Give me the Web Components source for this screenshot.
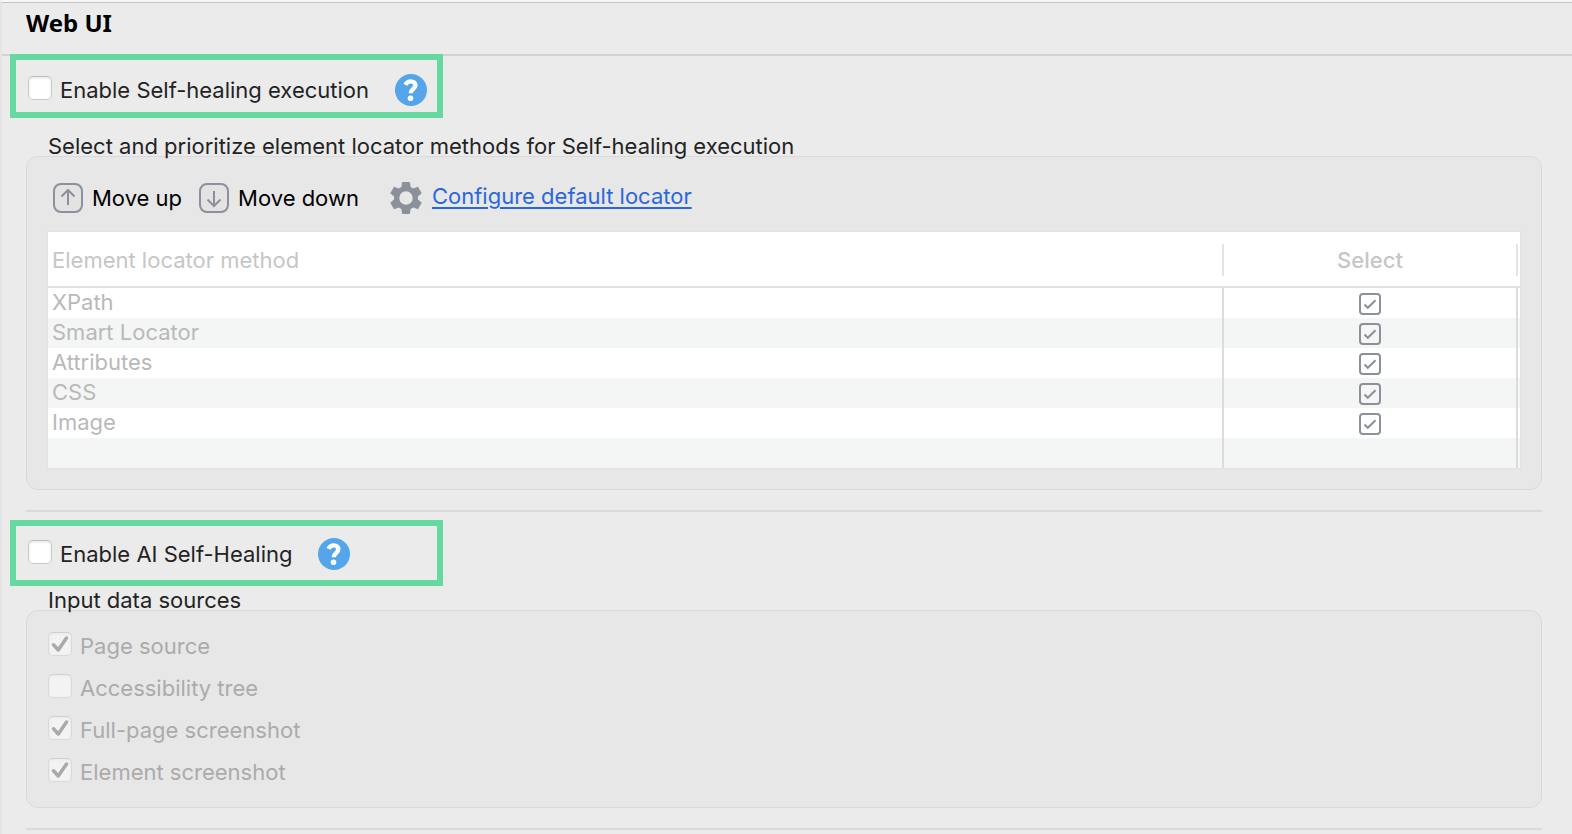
<!DOCTYPE html>
<html lang="en">
<head>
<meta charset="utf-8">
<title>Web UI</title>
<style>
  body { margin: 0; min-height: 100vh; background: #ebebeb; color: #232323; font: 22px/26px Inter, "Liberation Sans", sans-serif; }
</style>
</head>
<body>
<settings-page heading="Web UI">
  <feature-toggle label="Enable Self-healing execution" first></feature-toggle>
  <settings-group label="Select and prioritize element locator methods for Self-healing execution">
    <locator-toolbar></locator-toolbar>
    <locator-table></locator-table>
  </settings-group>
  <section-rule></section-rule>
  <feature-toggle label="Enable AI Self-Healing"></feature-toggle>
  <settings-group label="Input data sources" compact>
    <source-list>
      <check-option label="Page source" checked disabled></check-option>
      <check-option label="Accessibility tree" disabled></check-option>
      <check-option label="Full-page screenshot" checked disabled></check-option>
      <check-option label="Element screenshot" checked disabled></check-option>
    </source-list>
  </settings-group>
  <section-rule></section-rule>
</settings-page>

<script>
class BaseElement extends HTMLElement {
  constructor() {
    super();
    this.attachShadow({ mode: 'open' });
  }
  connectedCallback() {
    this.shadowRoot.innerHTML = this.render();
  }
}

customElements.define('settings-page', class extends BaseElement {
  render() {
    return `
      <style>
        :host { display: block; box-sizing: border-box; min-height: 100vh; border-top: 2px solid #f5f6f8; border-left: 2px solid #e4e4e4; }
        header { box-sizing: border-box; height: 54px; padding: 4px 24px; border-top: 1px solid #c3c3c3; border-bottom: 2px solid #d3d3d3; }
        h1 { margin: 0; font: bold 24px/32px "Noto Sans", sans-serif; color: #000; }
        main { display: flex; flex-direction: column; margin-top: -2px; }
      </style>
      <header><h1>${this.getAttribute('heading')}</h1></header>
      <main><slot></slot></main>`;
  }
});

customElements.define('check-option', class extends BaseElement {
  render() {
    const has = name => this.hasAttribute(name) ? name : '';
    return `
      <style>
        :host { display: block; }
        label { display: flex; gap: 8px; align-items: flex-start; height: 28px; line-height: 28px; white-space: nowrap; }
        .box { display: grid; }
        .box > * { grid-area: 1 / 1; }
        input { appearance: none; box-sizing: border-box; width: 24px; height: 24px; margin: 0; border: 1px solid #cbcbcb; border-top-color: #bdbdbd; border-radius: 5px; background: #fff; box-shadow: inset 0 1px 3px #e2e2e2; }
        input:disabled { border-color: #d9d9d9; border-top-color: #cfcfcf; background: #f3f3f3; box-shadow: inset 0 1px 3px #e9e9e9; }
        :host([disabled]) { color: #ababab; }
        svg { display: none; pointer-events: none; }
        input:checked + svg { display: block; }
      </style>
      <label>
        <span class="box">
          <input type="checkbox" ${has('checked')} ${has('disabled')}>
          <svg width="24" height="24" viewBox="0 0 24 24" fill="none" stroke="#aaa" stroke-width="3.5" stroke-linecap="round" stroke-linejoin="round"><path d="M5.500 12.800 10.300 18 18.500 6"/></svg>
        </span>
        <span>${this.getAttribute('label')}</span>
      </label>`;
  }
});

customElements.define('help-button', class extends BaseElement {
  render() {
    return `
      <style>
        :host { display: block; }
        button { display: block; width: 32px; height: 32px; margin: 0; padding: 0; border: 0; border-radius: 50%; background: none; }
        svg { display: block; }
      </style>
      <button type="button" aria-label="Help">
        <svg width="32" height="32" viewBox="0 0 32 32"><circle cx="16" cy="16" r="16" fill="#54a5e9"/><path d="M10.500 10.800C11.500 8.500 13.500 7.400 15.800 7.400c2.700 0 4.600 1.500 4.600 3.900 0 3.500-4.700 3.700-4.700 8" fill="none" stroke="#fff" stroke-width="4.400"/><circle cx="15.500" cy="24.200" r="2.800" fill="#fff"/></svg>
      </button>`;
  }
});

customElements.define('feature-toggle', class extends BaseElement {
  render() {
    return `
      <style>
        :host { display: flex; align-items: center; gap: 26px; box-sizing: border-box; width: 433px; height: 66px; margin-left: 8px; padding: 2px 12px 0; border: 6px solid #64d9a0; }
        :host([first]) { height: 64px; padding-top: 8px; }
      </style>
      <check-option label="${this.getAttribute('label')}"></check-option>
      <help-button></help-button>`;
  }
});

customElements.define('settings-group', class extends BaseElement {
  render() {
    return `
      <style>
        :host { display: block; margin: 15px 30px 0 24px; }
        :host([compact]) { margin-top: 1px; }
        fieldset { min-width: 0; margin: 0; padding: 0; border: 0; }
        legend { display: block; height: 23px; padding: 0 22px; line-height: 26px; }
        .panel { padding: 21px; border: 1px solid #d9d9d9; border-radius: 12px; background: #e7e7e7; }
      </style>
      <fieldset>
        <legend>${this.getAttribute('label')}</legend>
        <div class="panel"><slot></slot></div>
      </fieldset>`;
  }
});

customElements.define('section-rule', class extends BaseElement {
  render() {
    return `
      <style>
        :host { display: block; margin: 20px 30px 8px 24px; }
        hr { height: 2px; margin: 0; border: 0; background: #dadada; }
      </style>
      <hr>`;
  }
});

customElements.define('locator-toolbar', class extends BaseElement {
  render() {
    const frame = '<rect x="1" y="1" width="28" height="28" rx="7" fill="#e4e2e3"/>';
    return `
      <style>
        :host { display: flex; align-items: center; height: 32px; padding: 4px 5px 18px; }
        button { display: flex; align-items: center; gap: 9px; margin: 0 17px 0 0; padding: 0; border: 0; background: none; color: #000; font: inherit; white-space: nowrap; }
        .link { display: flex; align-items: center; gap: 10px; margin-left: 14px; }
        a { height: 30px; color: #2b67dc; text-decoration-thickness: 2px; text-underline-offset: 3px; white-space: nowrap; }
        svg { display: block; flex: none; }
      </style>
      <button type="button"><svg width="30" height="30" viewBox="0 0 30 30" fill="none" stroke="#8c909c" stroke-width="2">${frame}<path d="M15 22V7M8.500 13.500 15 7l6.500 6.500"/></svg>Move up</button>
      <button type="button"><svg width="30" height="30" viewBox="0 0 30 30" fill="none" stroke="#8c909c" stroke-width="2">${frame}<path d="M15 8v15M8.500 16.500 15 23l6.500-6.500"/></svg>Move down</button>
      <span class="link">
        <svg width="32" height="32" viewBox="2 2 20 20" fill="#8b909b"><path d="M19.430 12.980c.040-.320.070-.640.070-.980s-.030-.660-.070-.980l2.110-1.650c.190-.150.240-.420.120-.640l-2-3.460c-.120-.220-.390-.300-.610-.220l-2.490 1c-.520-.400-1.080-.730-1.690-.980l-.380-2.650C14.460 2.180 14.250 2 14 2h-4c-.250 0-.460.180-.490.420l-.380 2.650c-.610.250-1.170.590-1.690.980l-2.490-1c-.230-.090-.490 0-.610.220l-2 3.460c-.130.220-.070.490.120.640l2.110 1.650c-.040.320-.070.650-.070.980s.030.660.070.980l-2.110 1.650c-.190.150-.240.420-.120.640l2 3.460c.120.220.390.300.610.220l2.490-1c.520.400 1.080.730 1.690.980l.380 2.650c.030.240.240.420.490.420h4c.250 0 .460-.180.490-.420l.380-2.650c.610-.250 1.170-.590 1.690-.980l2.490 1c.230.090.490 0 .610-.220l2-3.460c.120-.220.070-.490-.120-.640l-2.110-1.650zM12 16.200a4.200 4.200 0 1 1 0-8.400 4.200 4.200 0 0 1 0 8.400z"/></svg>
        <a href="#">Configure default locator</a>
      </span>`;
  }
});

customElements.define('locator-table', class extends BaseElement {
  render() {
    const rows = ['XPath', 'Smart Locator', 'Attributes', 'CSS', 'Image'].map(name => `
      <tr><td>${name}</td><td class="pick"><span class="box">
        <input type="checkbox" aria-label="${name}" checked disabled>
        <svg width="22" height="22" viewBox="0 0 22 22" fill="none" stroke="#8b909b" stroke-width="2"><path d="m5.500 11.500 3.300 3.300L16.500 7.300"/></svg>
      </span></td></tr>`).join('');
    return `
      <style>
        :host { display: block; }
        table { width: 100%; table-layout: fixed; border-collapse: separate; border-spacing: 0; background: #fff; color: #b9b9b9; box-shadow: 0 0 0 1px #e3e3e3; }
        th, td { box-sizing: border-box; padding: 0 4px; text-align: left; font-weight: 400; }
        th { height: 56px; padding-top: 2px; border-bottom: 2px solid #e2e2e2; color: #c6c6c6; }
        td { height: 30px; padding-bottom: 2px; line-height: 28px; }
        tbody tr:nth-child(even) { background: #f4f5f5; }
        .pick { --line: linear-gradient(#dcdcdc, #dcdcdc); width: 298px; padding: 0 4px 0 2px; text-align: center; background: var(--line) left 0 top 0 / 2px 100% no-repeat, var(--line) right 2px top 0 / 2px 100% no-repeat; }
        th.pick { --line: linear-gradient(#e4e4e4, #e4e4e4); padding-top: 2px; font-weight: 500; background-size: 2px 32px; background-position: left 0 top 12px, right 2px top 12px; }
        .box { display: grid; justify-content: center; padding-top: 2px; }
        .box > * { grid-area: 1 / 1; }
        input { appearance: none; box-sizing: border-box; width: 22px; height: 22px; margin: 0; border: 2px solid #8b909b; border-radius: 4px; }
      </style>
      <table>
        <thead><tr><th>Element locator method</th><th class="pick">Select</th></tr></thead>
        <tbody>${rows}<tr><td></td><td class="pick"></td></tr></tbody>
      </table>`;
  }
});

customElements.define('source-list', class extends BaseElement {
  render() {
    return `
      <style>
        :host { display: flex; flex-direction: column; gap: 14px; }
      </style>
      <slot></slot>`;
  }
});
</script>
</body>
</html>
